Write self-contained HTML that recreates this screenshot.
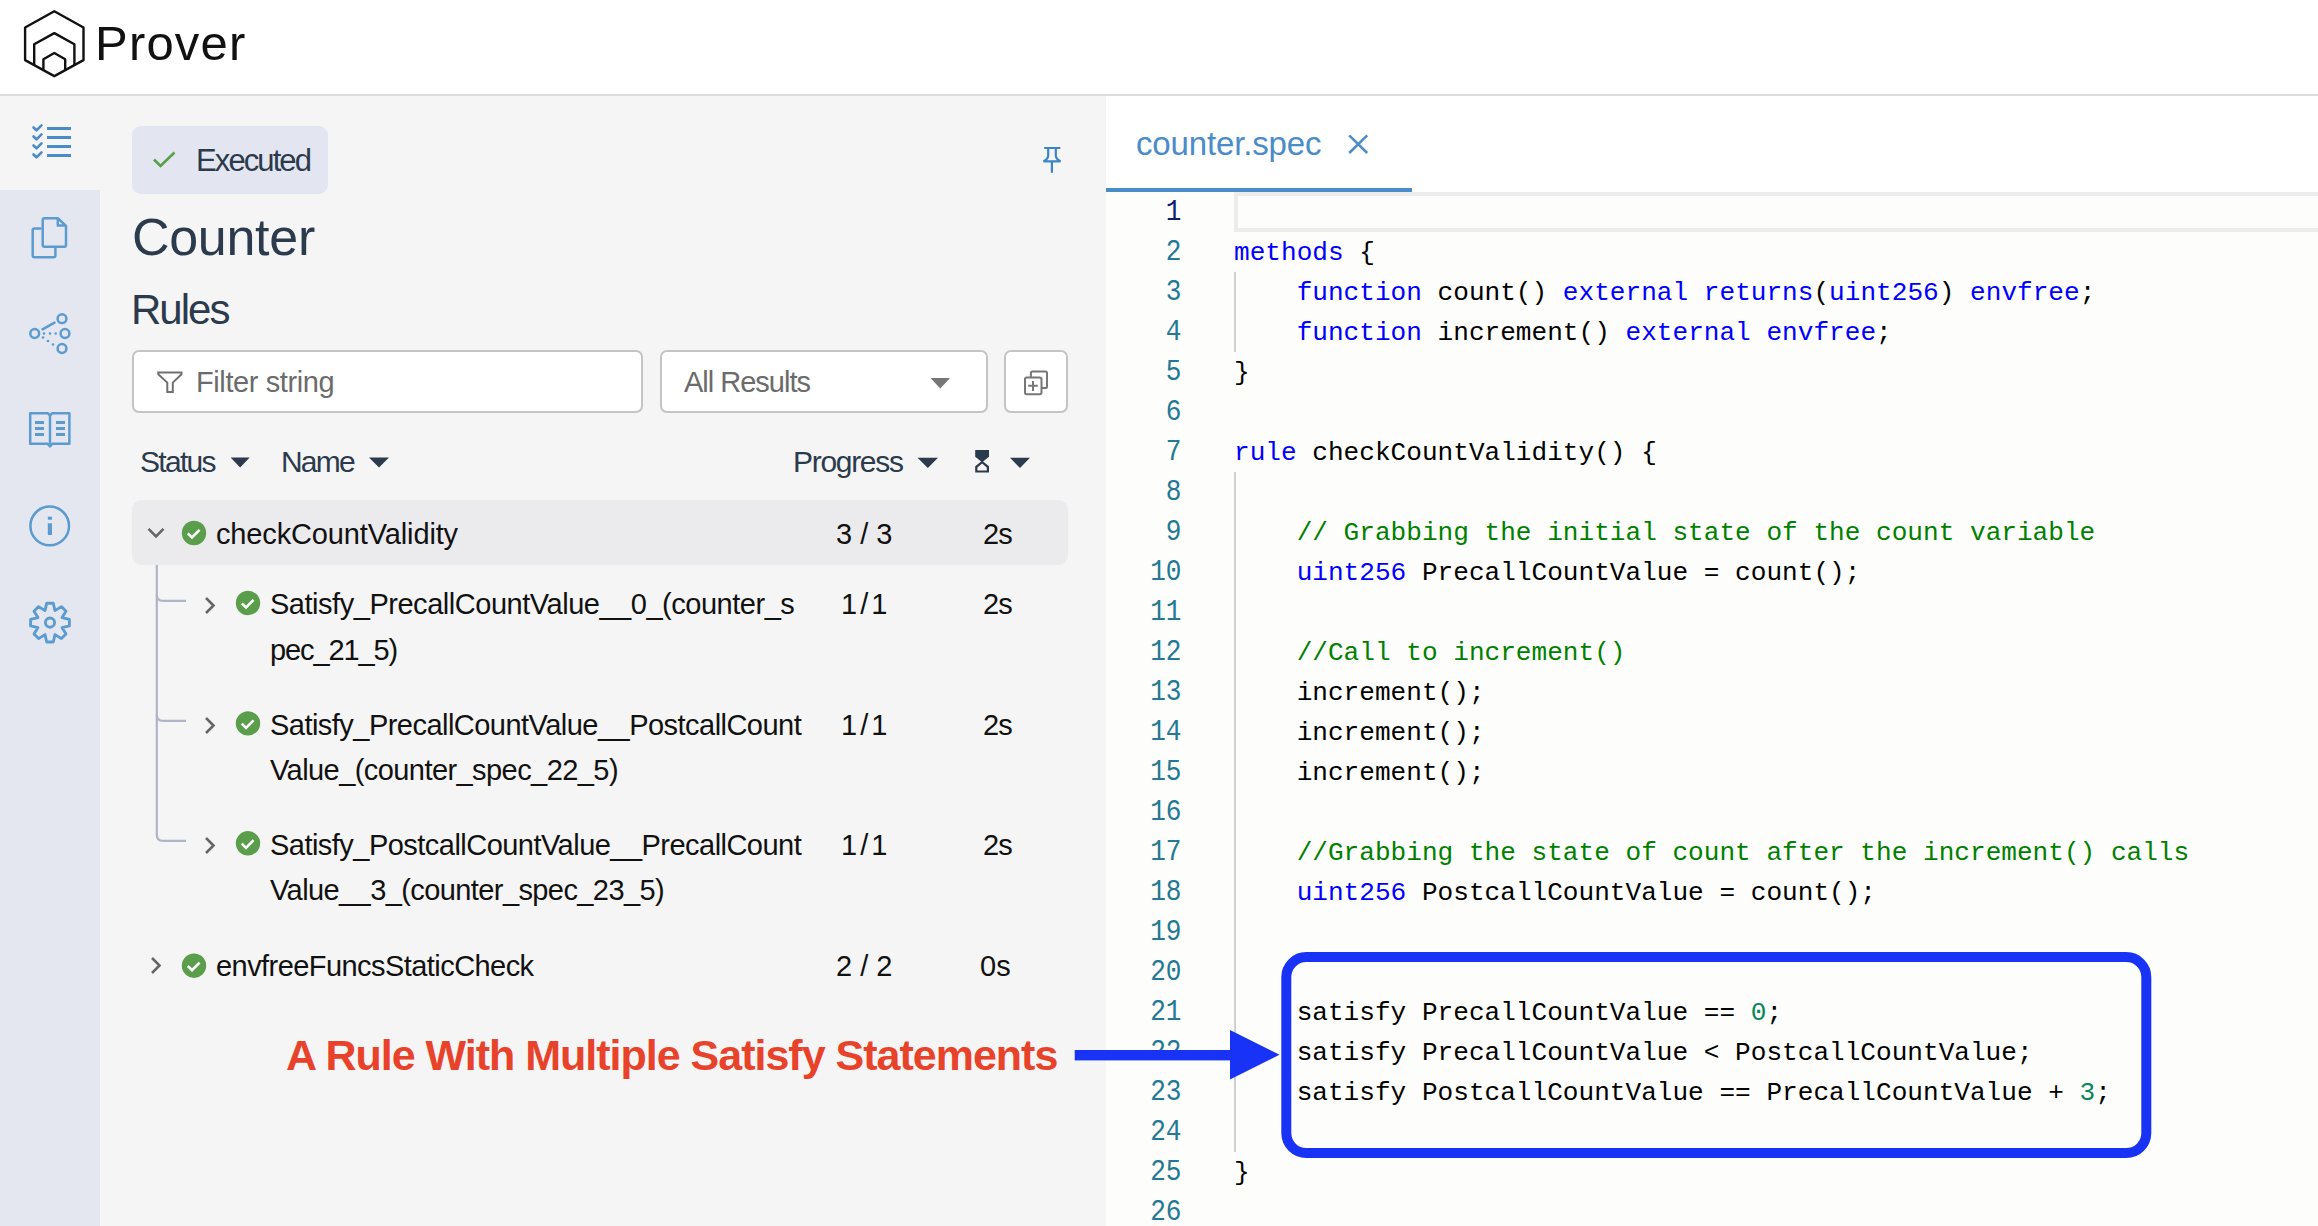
<!DOCTYPE html>
<html><head><meta charset="utf-8">
<style>
html,body{margin:0;padding:0;}
body{width:2318px;height:1226px;overflow:hidden;position:relative;background:#f5f5f5;font-family:"Liberation Sans",sans-serif;}
.a{position:absolute;white-space:pre;}
#hdr{position:absolute;left:0;top:0;width:2318px;height:94px;background:#fff;border-bottom:2px solid #dcdcdc;}
#side{position:absolute;left:0;top:96px;width:100px;height:1130px;background:#f5f5f5;}
#sideb{position:absolute;left:0;top:190px;width:100px;height:1036px;background:#e4e7f0;}
#panel{position:absolute;left:100px;top:96px;width:1006px;height:1130px;background:#f5f5f5;}
#editor{position:absolute;left:1106px;top:96px;width:1212px;height:1130px;background:#fff;}
#code{position:absolute;left:1106px;top:192px;width:1212px;height:1034px;background:#fdfdfb;}
.t{position:absolute;white-space:pre;line-height:1;}
.ln{height:40px;white-space:pre;} #gut,#codebox{white-space:normal;} #gut .ln{transform:scaleY(1.1);transform-origin:0 27px;} .act{color:#0b216f;} .k{color:#0000ff;} .c{color:#008000;} .n{color:#098658;}
.mono{font-family:"Liberation Mono",monospace;font-size:26.1px;line-height:40px;}
</style></head><body>
<div id="hdr"></div>
<div id="side"></div>
<div id="sideb"></div>
<div id="panel"></div>
<div id="editor"></div>
<div id="code"></div>

<!-- header -->
<svg class="a" style="left:0;top:0" width="300" height="94" viewBox="0 0 300 94">
<g fill="none" stroke="#111" stroke-width="2.4" stroke-linejoin="round">
<path d="M54.3,11.2 L83.5,27.5 L83.5,60.1 L54.3,76.1 L25.1,60.1 L25.1,27.5 Z"/>
<path d="M34.2,65 L34.2,44.2 L54.3,33.1 L74.4,44.2 L74.4,65"/>
<path d="M43.4,70.2 L43.4,59.2 L54.3,53 L65.2,59.2 L65.2,70.2"/>
</g></svg>
<div class="t" id="prover" style="left:95px;top:19px;font-size:49px;letter-spacing:1.2px;color:#111;">Prover</div>

<!-- sidebar icons -->
<svg class="a" style="left:0;top:96px" width="100" height="600" viewBox="0 96 100 600">
<g fill="none" stroke="#4a8cc8" stroke-width="3">
<path d="M47,128.4H71 M47,137.4H71 M47,146.4H71 M47,155.4H71"/>
<path stroke-width="2.6" stroke-linecap="round" stroke-linejoin="round" d="M33.5,127.5l3,2.8l5,-5 M33.5,136.5l3,2.8l5,-5 M33.5,145.5l3,2.8l5,-5 M33.5,154.5l3,2.8l5,-5"/>
</g>
<g fill="none" stroke="#5b9bd0" stroke-width="2.5" stroke-linejoin="round">
<path d="M41.5,228.5 H34.5 Q32.7,228.5 32.7,230.3 V255.5 Q32.7,257.3 34.5,257.3 H53.6 Q55.4,257.3 55.4,255.5 V248"/>
<path d="M44.5,218.2 H57.8 L66,226 V245 Q66,246.8 64.2,246.8 H44.5 Q42.7,246.8 42.7,245 V220 Q42.7,218.2 44.5,218.2 Z"/>
<path d="M57.8,218.5 V225.5 H65.5" />
<circle cx="34.7" cy="333.5" r="4.4"/>
<circle cx="62" cy="318.7" r="4.4"/>
<circle cx="65" cy="333.5" r="4.4"/>
<circle cx="62" cy="348.5" r="4.4"/>
<path d="M42.5,329.3 L54.5,322.6" stroke-linecap="round"/>
<path d="M30.2,413.3 H48 L50,415.5 L52,413.3 H69.4 V443.7 H52.5 L50,446.5 L47.5,443.7 H30.2 Z"/>
<path d="M50,415 V444"/>
<circle cx="49.7" cy="525.9" r="19.3"/>
<path stroke-width="2.85" d="M45.0,610.6 L46.7,603.2 L53.3,603.2 L55.0,610.6 L61.4,606.6 L66.0,611.2 L62.0,617.6 L69.4,619.3 L69.4,625.9 L62.0,627.6 L66.0,634.0 L61.4,638.6 L55.0,634.6 L53.3,642.0 L46.7,642.0 L45.0,634.6 L38.6,638.6 L34.0,634.0 L38.0,627.6 L30.6,625.9 L30.6,619.3 L38.0,617.6 L34.0,611.2 L38.6,606.6Z"/>
<circle stroke-width="2.85" cx="50" cy="622.6" r="4.6"/>
</g>
<g fill="#5b9bd0">
<circle cx="44" cy="333.5" r="1.3"/><circle cx="50" cy="333.5" r="1.3"/><circle cx="55.7" cy="333.5" r="1.3"/>
<circle cx="43" cy="337.5" r="1.3"/><circle cx="48" cy="341" r="1.3"/><circle cx="53" cy="344.5" r="1.3"/>
<rect x="35" y="421" width="9" height="3"/><rect x="35" y="427" width="9" height="3"/><rect x="35" y="433" width="9" height="3"/>
<rect x="56" y="421" width="9" height="3"/><rect x="56" y="427" width="9" height="3"/><rect x="56" y="433" width="9" height="3"/>
<rect x="47.8" y="516.7" width="4.2" height="3"/><rect x="47.8" y="523.3" width="4.2" height="11.7"/>
</g>
</svg>

<!-- panel -->
<div class="a" style="left:132px;top:126px;width:196px;height:68px;background:#e3e6f0;border-radius:9px;"></div>
<svg class="a" style="left:150px;top:148px" width="30" height="24" viewBox="150 148 30 24"><path d="M154,159.5 L160.5,166 L174.5,152.5" fill="none" stroke="#56a046" stroke-width="2.6"/></svg>
<div class="t" id="executed" style="left:196px;top:145px;font-size:31px;letter-spacing:-1.9px;color:#2b3a4c;">Executed</div>
<svg class="a" style="left:1036px;top:140px" width="32" height="40" viewBox="1036 140 32 40"><g fill="none" stroke="#3d85c6" stroke-width="2.2" stroke-linecap="round"><path d="M1045,148H1059.5 M1048.2,148V155.5Q1048.2,159 1043.5,161.3H1060.5Q1055.8,159 1055.8,155.5V148 M1051.9,161.3V172"/></g></svg>
<div class="t" id="counter" style="left:132px;top:211px;font-size:52px;letter-spacing:-0.3px;color:#2b3a4c;">Counter</div>
<div class="t" id="rules" style="left:131px;top:289px;font-size:42px;letter-spacing:-2px;color:#2b3a4c;">Rules</div>

<div class="a" style="left:132px;top:350px;width:507px;height:59px;background:#fff;border:2px solid #c4c4c4;border-radius:7px;"></div>
<svg class="a" style="left:150px;top:365px" width="40" height="34" viewBox="150 365 40 34"><path d="M158.3,372.4H181.5V374.3L172.8,382.6V391.9H167.3V382.6L158.3,374.3Z" fill="none" stroke="#707070" stroke-width="2" stroke-linejoin="miter"/></svg>
<div class="t" id="filter" style="left:196px;top:368px;font-size:29px;letter-spacing:-0.4px;color:#6b6b6b;">Filter string</div>

<div class="a" style="left:660px;top:350px;width:324px;height:59px;background:#fff;border:2px solid #c4c4c4;border-radius:7px;"></div>
<div class="t" id="allres" style="left:684px;top:368px;font-size:29px;letter-spacing:-1px;color:#6b6b6b;">All Results</div>
<svg class="a" style="left:925px;top:372px" width="30" height="22" viewBox="925 372 30 22"><path d="M930.5,378H950L940.25,388.5Z" fill="#777"/></svg>

<div class="a" style="left:1004px;top:350px;width:60px;height:59px;background:#fff;border:2px solid #c4c4c4;border-radius:7px;"></div>
<svg class="a" style="left:1018px;top:365px" width="36" height="36" viewBox="1018 365 36 36"><g fill="none" stroke="#777" stroke-width="2"><path d="M1030.9,377.6V373Q1030.9,371.4 1032.5,371.4H1045.4Q1047,371.4 1047,373V386.4Q1047,388 1045.4,388H1041.5"/><rect x="1025" y="377.5" width="16.5" height="16.8" rx="1.8"/><path d="M1033,381V391 M1028.2,385.8H1037.8"/></g></svg>

<div class="t" id="hstatus" style="left:140px;top:447px;font-size:30px;letter-spacing:-1.7px;color:#2b3a4c;">Status</div>
<svg class="a" style="left:225px;top:450px" width="30" height="22" viewBox="225 450 30 22"><path d="M230.6,457.6H249.7L240.15,467.6Z" fill="#2b3a4c"/></svg>
<div class="t" id="hname" style="left:281px;top:447px;font-size:30px;letter-spacing:-1.8px;color:#2b3a4c;">Name</div>
<svg class="a" style="left:364px;top:450px" width="30" height="22" viewBox="364 450 30 22"><path d="M369,457.6H389L379,467.6Z" fill="#2b3a4c"/></svg>
<div class="t" id="hprog" style="left:793px;top:447px;font-size:30px;letter-spacing:-1.3px;color:#2b3a4c;">Progress</div>
<svg class="a" style="left:912px;top:450px" width="30" height="22" viewBox="912 450 30 22"><path d="M917.6,457.7H938L927.8,468Z" fill="#2b3a4c"/></svg>
<svg class="a" style="left:970px;top:445px" width="24" height="32" viewBox="970 445 24 32"><path fill="#2b3a4c" d="M975.2,450H989V456.8L982.1,462.2L975.2,456.8Z"/><path fill="#2b3a4c" fill-rule="evenodd" d="M982.1,460.8L989,466.2V472.6H975.2V466.2Z M982.1,463.6L986.8,467.4V470.4H977.4V467.4Z"/></svg>
<svg class="a" style="left:1005px;top:450px" width="30" height="22" viewBox="1005 450 30 22"><path d="M1010,457.7H1030L1020,468Z" fill="#2b3a4c"/></svg>

<!-- rules list -->
<div class="a" style="left:132px;top:500px;width:936px;height:65px;background:#ebebee;border-radius:9px;"></div>
<svg class="a" style="left:0;top:490px" width="1100" height="520" viewBox="0 490 1100 520">
<g fill="none" stroke="#b0b4c9" stroke-width="2.2">
<path d="M156.8,565 V834.8 Q156.8,840.9 162.9,840.9 H186"/>
<path d="M156.8,594.8 Q156.8,600.9 162.9,600.9 H186"/>
<path d="M156.8,714.8 Q156.8,720.9 162.9,720.9 H186"/>
</g>
<g fill="none" stroke="#666" stroke-width="2.6">
<path d="M148.5,528.8 L156,536.3 L163.5,528.8"/>
<path d="M206,598 L213.5,605.5 L206,613"/>
<path d="M206,718 L213.5,725.5 L206,733"/>
<path d="M206,838 L213.5,845.5 L206,853"/>
<path d="M152,958 L159.5,965.5 L152,973"/>
</g>
<circle cx="194" cy="533" r="12.2" fill="#5a9e4b"/><path d="M187.8,533.3 l4.2,4.2 l7.6,-7.6" fill="none" stroke="#fff" stroke-width="2.6"/>
<circle cx="248" cy="603" r="12.2" fill="#5a9e4b"/><path d="M241.8,603.3 l4.2,4.2 l7.6,-7.6" fill="none" stroke="#fff" stroke-width="2.6"/>
<circle cx="248" cy="723.4" r="12.2" fill="#5a9e4b"/><path d="M241.8,723.7 l4.2,4.2 l7.6,-7.6" fill="none" stroke="#fff" stroke-width="2.6"/>
<circle cx="248" cy="843.3" r="12.2" fill="#5a9e4b"/><path d="M241.8,843.6 l4.2,4.2 l7.6,-7.6" fill="none" stroke="#fff" stroke-width="2.6"/>
<circle cx="194" cy="965.7" r="12.2" fill="#5a9e4b"/><path d="M187.8,966.0 l4.2,4.2 l7.6,-7.6" fill="none" stroke="#fff" stroke-width="2.6"/>
</svg>
<div class="t" id="r1" style="left:216px;top:520px;font-size:29px;color:#111;letter-spacing:-0.14px;">checkCountValidity</div>
<div class="t" id="r1p" style="left:836px;top:520px;font-size:29px;color:#111;">3 / 3</div>
<div class="t" id="r1t" style="left:983px;top:520px;font-size:29px;color:#111;letter-spacing:-1px;">2s</div>
<div class="t" id="r2a" style="left:270px;top:590px;font-size:29px;color:#111;letter-spacing:-0.47px;">Satisfy_PrecallCountValue__0_(counter_s</div>
<div class="t" id="r2b" style="left:270px;top:636px;font-size:29px;color:#111;letter-spacing:-1.1px;">pec_21_5)</div>
<div class="t" id="r2p" style="left:841px;top:590px;font-size:29px;color:#111;letter-spacing:-2.5px;">1 / 1</div>
<div class="t" id="r2t" style="left:983px;top:590px;font-size:29px;color:#111;letter-spacing:-1px;">2s</div>
<div class="t" id="r3a" style="left:270px;top:711px;font-size:29px;color:#111;letter-spacing:-0.53px;">Satisfy_PrecallCountValue__PostcallCount</div>
<div class="t" id="r3b" style="left:270px;top:756px;font-size:29px;color:#111;letter-spacing:-0.57px;">Value_(counter_spec_22_5)</div>
<div class="t" id="r3p" style="left:841px;top:711px;font-size:29px;color:#111;letter-spacing:-2.5px;">1 / 1</div>
<div class="t" id="r3t" style="left:983px;top:711px;font-size:29px;color:#111;letter-spacing:-1px;">2s</div>
<div class="t" id="r4a" style="left:270px;top:831px;font-size:29px;color:#111;letter-spacing:-0.53px;">Satisfy_PostcallCountValue__PrecallCount</div>
<div class="t" id="r4b" style="left:270px;top:876px;font-size:29px;color:#111;letter-spacing:-0.59px;">Value__3_(counter_spec_23_5)</div>
<div class="t" id="r4p" style="left:841px;top:831px;font-size:29px;color:#111;letter-spacing:-2.5px;">1 / 1</div>
<div class="t" id="r4t" style="left:983px;top:831px;font-size:29px;color:#111;letter-spacing:-1px;">2s</div>
<div class="t" id="r5" style="left:216px;top:952px;font-size:29px;color:#111;letter-spacing:-0.56px;">envfreeFuncsStaticCheck</div>
<div class="t" id="r5p" style="left:836px;top:952px;font-size:29px;color:#111;">2 / 2</div>
<div class="t" id="r5t" style="left:980px;top:952px;font-size:29px;color:#111;letter-spacing:0px;">0s</div>

<!-- editor -->
<div class="t" id="tab" style="left:1136px;top:127px;font-size:33px;letter-spacing:-0.15px;color:#4a8cc8;">counter.spec</div>
<svg class="a" style="left:1340px;top:128px" width="36" height="34" viewBox="1340 128 36 34"><path d="M1349.2,135.3L1367.2,153 M1367.2,135.3L1349.2,153" stroke="#4a8cc8" stroke-width="2.5" fill="none"/></svg>
<div class="a" style="left:1106px;top:188px;width:306px;height:4px;background:#4a8cc8;"></div>
<div class="a" style="left:1234px;top:192px;width:1100px;height:32px;border:4px solid #ececec;"></div>
<div class="a" style="left:1234px;top:272px;width:2px;height:80px;background:#d0d0d0;"></div>
<div class="a" style="left:1234px;top:472px;width:2px;height:680px;background:#d0d0d0;"></div>
<div class="a mono" id="gut" style="left:1106px;top:193px;width:75.5px;text-align:right;color:#237893;">
<div class="ln act">1</div>
<div class="ln">2</div>
<div class="ln">3</div>
<div class="ln">4</div>
<div class="ln">5</div>
<div class="ln">6</div>
<div class="ln">7</div>
<div class="ln">8</div>
<div class="ln">9</div>
<div class="ln">10</div>
<div class="ln">11</div>
<div class="ln">12</div>
<div class="ln">13</div>
<div class="ln">14</div>
<div class="ln">15</div>
<div class="ln">16</div>
<div class="ln">17</div>
<div class="ln">18</div>
<div class="ln">19</div>
<div class="ln">20</div>
<div class="ln">21</div>
<div class="ln">22</div>
<div class="ln">23</div>
<div class="ln">24</div>
<div class="ln">25</div>
<div class="ln">26</div>
</div>
<div class="a mono" id="codebox" style="left:1234px;top:193px;color:#000;">
<div class="ln"> </div>
<div class="ln"><span class="k">methods</span> {</div>
<div class="ln">    <span class="k">function</span> count() <span class="k">external</span> <span class="k">returns</span>(<span class="k">uint256</span>) <span class="k">envfree</span>;</div>
<div class="ln">    <span class="k">function</span> increment() <span class="k">external</span> <span class="k">envfree</span>;</div>
<div class="ln">}</div>
<div class="ln"> </div>
<div class="ln"><span class="k">rule</span> checkCountValidity() {</div>
<div class="ln"> </div>
<div class="ln">    <span class="c">// Grabbing the initial state of the count variable</span></div>
<div class="ln">    <span class="k">uint256</span> PrecallCountValue = count();</div>
<div class="ln"> </div>
<div class="ln">    <span class="c">//Call to increment()</span></div>
<div class="ln">    increment();</div>
<div class="ln">    increment();</div>
<div class="ln">    increment();</div>
<div class="ln"> </div>
<div class="ln">    <span class="c">//Grabbing the state of count after the increment() calls</span></div>
<div class="ln">    <span class="k">uint256</span> PostcallCountValue = count();</div>
<div class="ln"> </div>
<div class="ln"> </div>
<div class="ln">    satisfy PrecallCountValue == <span class="n">0</span>;</div>
<div class="ln">    satisfy PrecallCountValue &lt; PostcallCountValue;</div>
<div class="ln">    satisfy PostcallCountValue == PrecallCountValue + <span class="n">3</span>;</div>
<div class="ln"> </div>
<div class="ln">}</div>
<div class="ln"> </div>
</div>

<!-- annotation -->
<div class="t" id="annot" style="left:286px;top:1034px;font-size:43px;letter-spacing:-1px;font-weight:bold;color:#e8432a;">A Rule With Multiple Satisfy Statements</div>
<svg class="a" style="left:1060px;top:940px" width="1100" height="230" viewBox="1060 940 1100 230">
<rect x="1286.3" y="957.1" width="860" height="196" rx="20" ry="20" fill="none" stroke="#1833f5" stroke-width="10"/>
<rect x="1074.7" y="1050" width="160" height="10.4" fill="#1833f5"/>
<path d="M1230,1030 L1279.5,1054.7 L1230,1079.5 Z" fill="#1833f5"/>
</svg>
</body></html>
